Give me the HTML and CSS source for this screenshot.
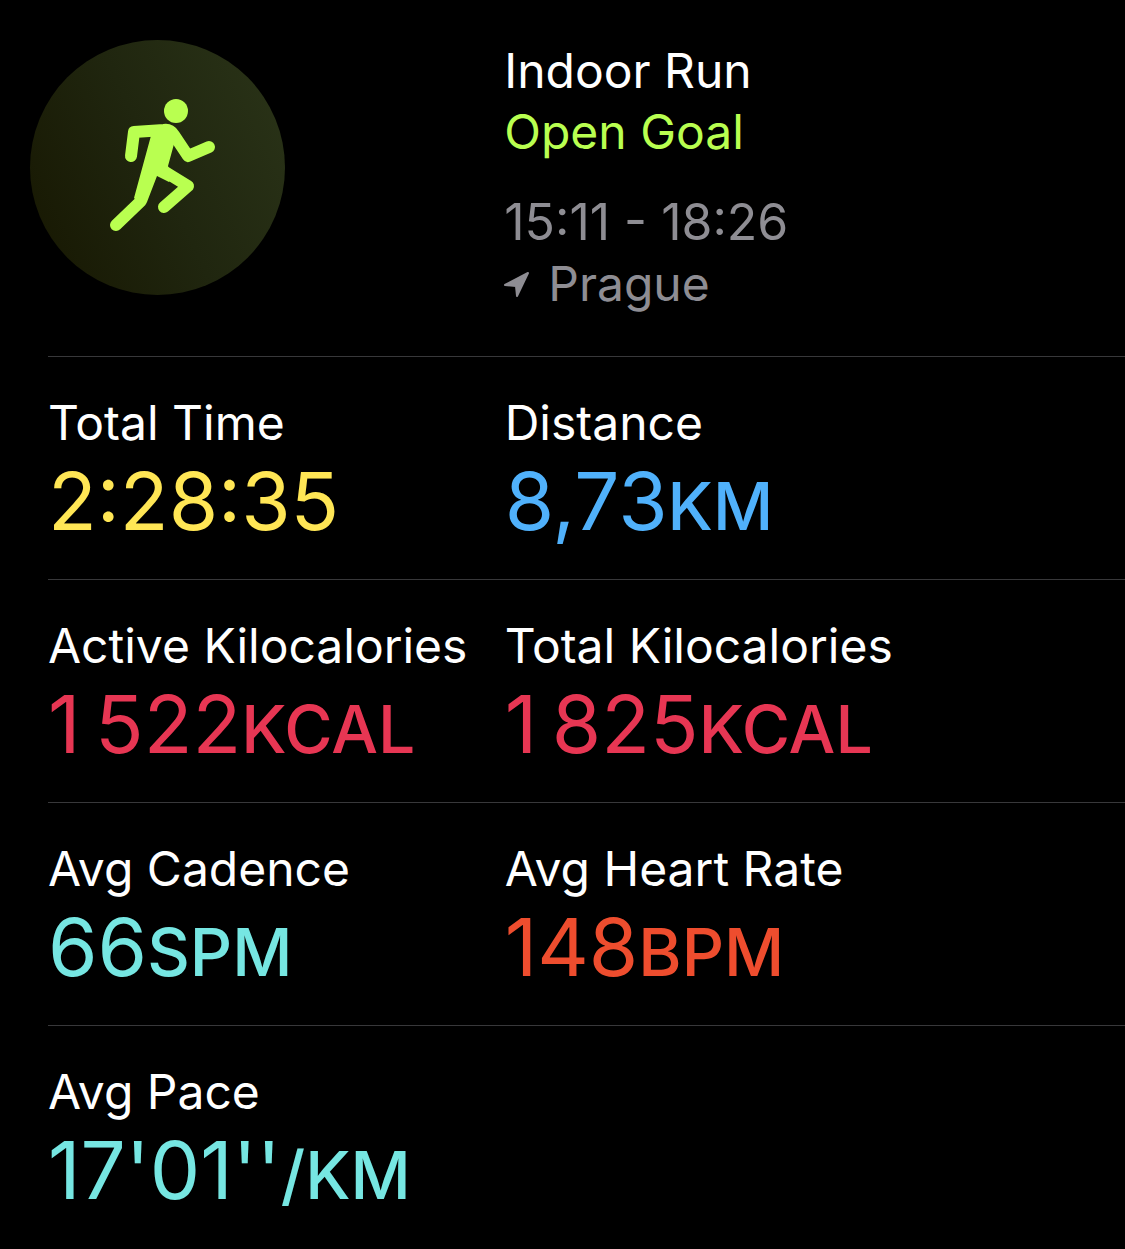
FILE: index.html
```html
<!DOCTYPE html>
<html lang="en">
<head>
  <meta charset="UTF-8" />
  <meta name="viewport" content="width=device-width, initial-scale=1.0" />
  <title>Indoor Run</title>
  <link rel="stylesheet" href="styles.css">
</head>
<body>
  <header class="summary">
    <div class="badge">
      <svg viewBox="0 0 255 255" aria-hidden="true">
        <circle cx="146" cy="71" r="12" />
        <path class="limb" d="M101 116 L104 92 L134 90 Q140 89 144 95 L158 116 L179 107" />
        <path class="limb" d="M132 130 L158 146 L134 167" />
        <path class="limb" d="M86 185 L111 161" />
        <path d="M122 92 L138 85 L150 97 L144 104 L138 126 L142 138 L139 142 L127 136 L117 162 L111 165 L104 158 Z" />
      </svg>
    </div>
    <div class="details">
      <h1>Indoor Run</h1>
      <p class="goal">Open Goal</p>
      <p class="time">15:11 - 18:26</p>
      <p class="place">
        <svg viewBox="0 0 26 26" aria-hidden="true"><path d="M1 14 L24 2 L13 25 L12 15 Z" /></svg>
        Prague
      </p>
    </div>
  </header>

  <main class="stats">
    <dl class="row">
      <div class="stat">
        <dt>Total Time</dt>
        <dd class="yellow">2:28:35</dd>
      </div>
      <div class="stat">
        <dt>Distance</dt>
        <dd class="blue">8,73<span class="unit">KM</span></dd>
      </div>
    </dl>
    <dl class="row">
      <div class="stat">
        <dt>Active Kilocalories</dt>
        <dd class="red">1&#8201;522<span class="unit">KCAL</span></dd>
      </div>
      <div class="stat">
        <dt>Total Kilocalories</dt>
        <dd class="red">1&#8201;825<span class="unit">KCAL</span></dd>
      </div>
    </dl>
    <dl class="row">
      <div class="stat">
        <dt>Avg Cadence</dt>
        <dd class="cyan">66<span class="unit">SPM</span></dd>
      </div>
      <div class="stat">
        <dt>Avg Heart Rate</dt>
        <dd class="orange">148<span class="unit">BPM</span></dd>
      </div>
    </dl>
    <dl class="row">
      <div class="stat">
        <dt>Avg Pace</dt>
        <dd class="cyan">17'01''<span class="unit">/KM</span></dd>
      </div>
    </dl>
  </main>
</body>
</html>
```
FILE: styles.css
```css
* {
  box-sizing: border-box;
}
body {
  font-family: Inter, "Liberation Sans", sans-serif;
  font-size: 48px;
  line-height: 61px;
  background-color: #000;
  color: #fff;
  margin: 0;
}
h1, p, dl, dd {
  margin: 0;
}
h1 {
  font-size: 48px;
  font-weight: 400;
}
.summary {
  display: grid;
  grid-template-columns: calc(45% - 2px) 1fr;
  padding: 40px 0 42px;
}
.badge {
  width: 255px;
  height: 255px;
  margin-left: 30px;
  border-radius: 50%;
  background: linear-gradient(65deg, #181903 8%, #20260f 50%, #293217 92%);
}
.badge svg {
  display: block;
  fill: #b9ff50;
}
.badge .limb {
  fill: none;
  stroke: #b9ff50;
  stroke-width: 12;
  stroke-linecap: round;
  stroke-linejoin: round;
}
.goal {
  color: #b9ff50;
}
.time {
  margin-top: 30px;
  font-size: 50px;
  color: #8e8d93;
}
.place {
  display: flex;
  align-items: center;
  gap: 18px;
  color: #8e8d93;
}
.place svg {
  width: 26px;
  height: 26px;
  fill: #8e8d93;
  stroke: #8e8d93;
  stroke-width: 2;
  stroke-linejoin: round;
}
.row {
  display: grid;
  grid-template-columns: calc(45% - 28px) 1fr;
  margin-left: 48px;
  padding: 36px 0 30px;
  border-top: 1px solid #38383a;
}
.stat {
  white-space: nowrap;
}
dt {
  line-height: 60px;
}
dd {
  font-size: 80px;
  line-height: 96px;
}
.unit {
  font-size: 66px;
  font-weight: 500;
  line-height: 1;
}
.yellow {
  color: #ffe655;
}
.blue {
  color: #50b1fb;
}
.red {
  color: #e73653;
}
.cyan {
  color: #76e6e2;
}
.orange {
  color: #ee4d2e;
}
```
